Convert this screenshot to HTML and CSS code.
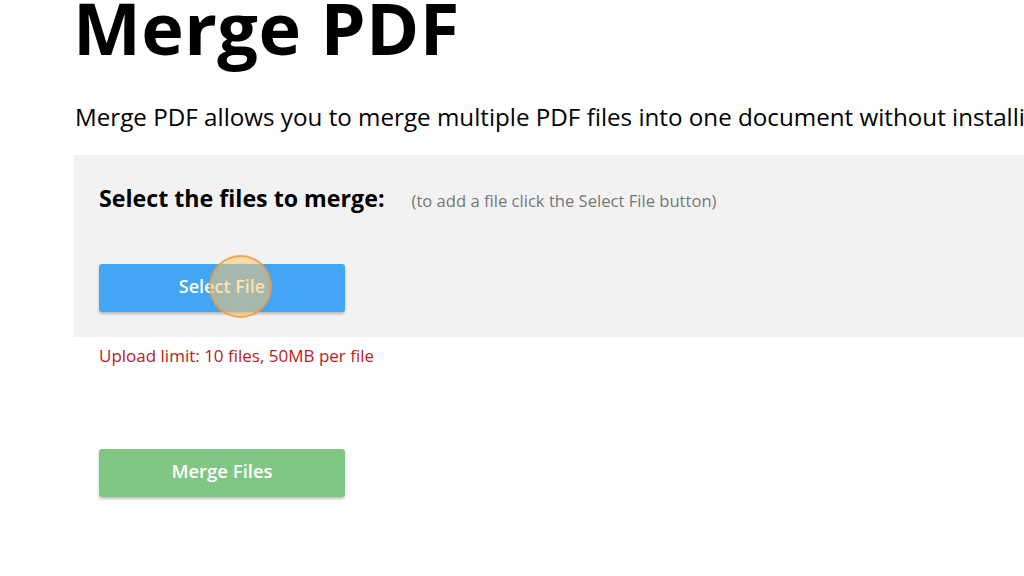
FILE: index.html
```html
<!DOCTYPE html>
<html>
<head>
<meta charset="utf-8">
<link rel="stylesheet" href="styles.css">
</head>
<body>
<main class="page">
  <h1 class="title">Merge PDF</h1>
  <p class="lead">Merge PDF allows you to merge multiple PDF files into one document without installing any software.</p>
  <section class="panel">
    <div class="panel-head">
      <h2 class="panel-title">Select the files to merge:</h2>
      <span class="hint">(to add a file click the Select File button)</span>
    </div>
    <div class="select-wrap">
      <button class="btn btn-blue">Select File</button>
      <span class="click-dot"></span>
    </div>
  </section>
  <p class="limit">Upload limit: 10 files, 50MB per file</p>
  <button class="btn btn-green">Merge Files</button>
</main>
</body>
</html>
```
FILE: styles.css
```css
html, body {
  margin: 0;
  padding: 0;
  background: #ffffff;
  overflow: hidden;
}
body {
  font-family: "Open Sans", "Noto Sans", sans-serif;
  color: #000;
  width: 1024px;
  height: 576px;
}
.page {
  padding-left: 74px;
  width: 1400px;
}
.title {
  margin: 0 0 0 -1px;
  font-size: 72px;
  font-weight: 700;
  line-height: 54px;
  letter-spacing: 0.4px;
}
.lead {
  margin: 48px 0 0 1px;
  font-size: 24.2px;
  line-height: 30px;
  white-space: nowrap;
}
.panel {
  margin-top: 23px;
  background: #f2f2f2;
  height: 182px;
  padding: 28px 25px 0;
  box-sizing: border-box;
}
.panel-head {
  display: flex;
  align-items: baseline;
  gap: 27px;
}
.panel-title {
  margin: 0;
  font-size: 23.2px;
  font-weight: 700;
  line-height: 30px;
}
.hint {
  font-size: 16.6px;
  color: #777;
}
.select-wrap {
  position: relative;
  width: 246px;
  margin-top: 51px;
}
.btn {
  display: block;
  width: 246px;
  height: 48px;
  padding: 0 0 4px;
  border: 0;
  border-radius: 3px;
  font-family: inherit;
  font-size: 18px;
  font-weight: 600;
  color: #fff;
  box-shadow: 0 2px 3px rgba(0,0,0,0.25);
}
.btn-blue {
  background: #42a5f5;
}
.btn-green {
  background: #81c784;
  margin: 81px 0 0 25px;
  padding-bottom: 5px;
  font-size: 18.5px;
}
.click-dot {
  position: absolute;
  left: 110px;
  top: -9px;
  width: 63px;
  height: 63px;
  border-radius: 50%;
  background: rgba(250, 200, 110, 0.55);
  border: 2px solid rgba(235, 150, 60, 0.75);
  box-sizing: border-box;
}
.limit {
  margin: 7px 0 0 25px;
  font-size: 17px;
  line-height: 24px;
  color: #b71c1c;
}
```
